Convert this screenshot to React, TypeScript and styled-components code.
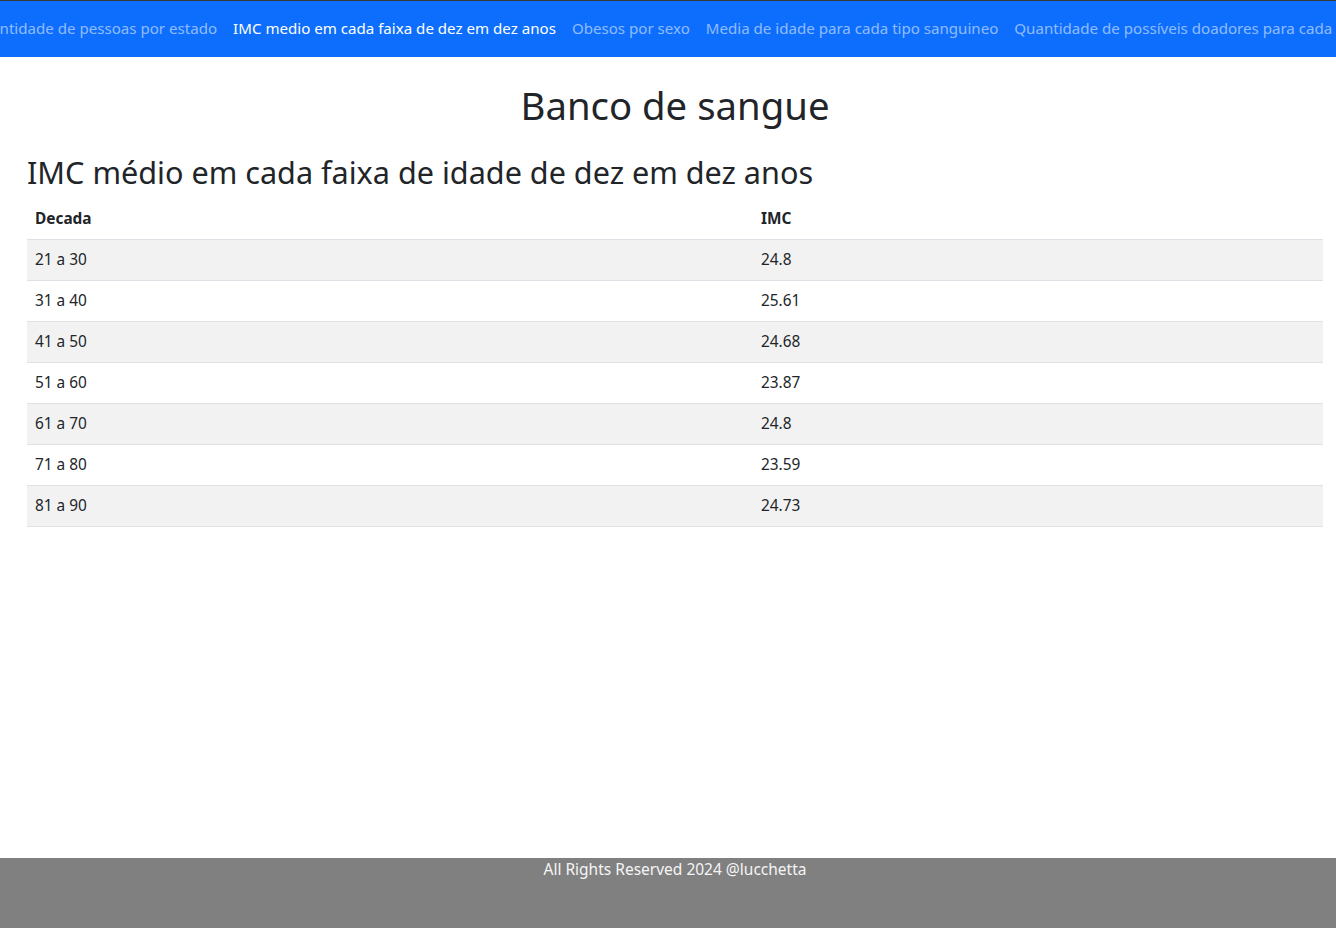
import React, { useLayoutEffect, useRef } from "react";
import styled, { createGlobalStyle } from "styled-components";

const GlobalStyle = createGlobalStyle`
  html, body {
    margin: 0;
    padding: 0;
    overflow-x: hidden;
    background: #fff;
  }
  body {
    font-family: "Noto Sans", "Open Sans", sans-serif;
    color: #212529;
    font-size: 15.4px;
    line-height: 1.5;
  }
  * { box-sizing: border-box; }
`;

const Page = styled.div`
  width: 1350px;
  min-height: 100vh;
  display: flex;
  flex-direction: column;
`;

const NavBar = styled.nav`
  height: 57px;
  background: #0d6efd;
  border-top: 1px solid #3a3a3a;
  display: flex;
  align-items: center;
  width: 1336px;
  overflow: hidden;
`;

const NavList = styled.ul`
  list-style: none;
  margin: 0;
  padding: 0 0 2px;
  display: flex;
  flex-wrap: nowrap;
  white-space: nowrap;
`;

const NavLink = styled.a<{ $active?: boolean }>`
  display: block;
  padding: 8px;
  text-decoration: none;
  color: ${({ $active }) => ($active ? "#fff" : "rgba(255, 255, 255, 0.55)")};
  font-size: 15.1px;
  line-height: 24px;
`;

const Main = styled.main`
  padding: 0 27px;
  flex: 1;
`;

const Title = styled.h1`
  margin: 24px 0 8px;
  font-size: 38.3px;
  line-height: 48px;
  font-weight: 400;
  text-align: center;
`;

const Subtitle = styled.h2`
  margin: 24px 0 8px;
  font-size: 30.6px;
  line-height: 38px;
  font-weight: 400;
`;

const Table = styled.table`
  width: 100%;
  border-collapse: collapse;
  table-layout: fixed;
`;

const HeadCell = styled.th<{ $width?: number }>`
  text-align: left;
  padding: 8px;
  font-weight: 700;
  line-height: 24px;
  border-bottom: 1px solid #dee2e6;
  width: ${({ $width }) => ($width ? `${$width}px` : "auto")};
`;

const Row = styled.tr`
  &:nth-child(odd) {
    background: #f2f2f2;
  }
`;

const Cell = styled.td`
  padding: 8px;
  line-height: 24px;
  border-bottom: 1px solid #dee2e6;
`;

const Footer = styled.footer`
  height: 70px;
  background: #808080;
  color: #f5f5f5;
  text-align: center;
  font-size: 15.5px;
  line-height: 22px;
`;

const links = [
  "Quantidade de pessoas por estado",
  "IMC medio em cada faixa de dez em dez anos",
  "Obesos por sexo",
  "Media de idade para cada tipo sanguineo",
  "Quantidade de possíveis doadores para cada tipo sanguineo",
];

const rows = [
  ["21 a 30", "24.8"],
  ["31 a 40", "25.61"],
  ["41 a 50", "24.68"],
  ["51 a 60", "23.87"],
  ["61 a 70", "24.8"],
  ["71 a 80", "23.59"],
  ["81 a 90", "24.73"],
];

const App: React.FC = () => {
  const navRef = useRef<HTMLElement>(null);
  const activeRef = useRef<HTMLAnchorElement>(null);

  useLayoutEffect(() => {
    if (navRef.current && activeRef.current) {
      navRef.current.scrollLeft = activeRef.current.offsetLeft - 225;
    }
  }, []);

  return (
    <Page>
      <GlobalStyle />
      <NavBar ref={navRef}>
        <NavList>
          {links.map((label, i) => (
            <li key={label}>
              <NavLink href="#" $active={i === 1} ref={i === 1 ? activeRef : undefined}>
                {label}
              </NavLink>
            </li>
          ))}
        </NavList>
      </NavBar>
      <Main>
        <Title>Banco de sangue</Title>
        <Subtitle>IMC médio em cada faixa de idade de dez em dez anos</Subtitle>
        <Table>
          <thead>
            <tr>
              <HeadCell $width={726}>Decada</HeadCell>
              <HeadCell>IMC</HeadCell>
            </tr>
          </thead>
          <tbody>
            {rows.map(([decade, imc]) => (
              <Row key={decade}>
                <Cell>{decade}</Cell>
                <Cell>{imc}</Cell>
              </Row>
            ))}
          </tbody>
        </Table>
      </Main>
      <Footer>All Rights Reserved 2024 @lucchetta</Footer>
    </Page>
  );
};

export default App;
